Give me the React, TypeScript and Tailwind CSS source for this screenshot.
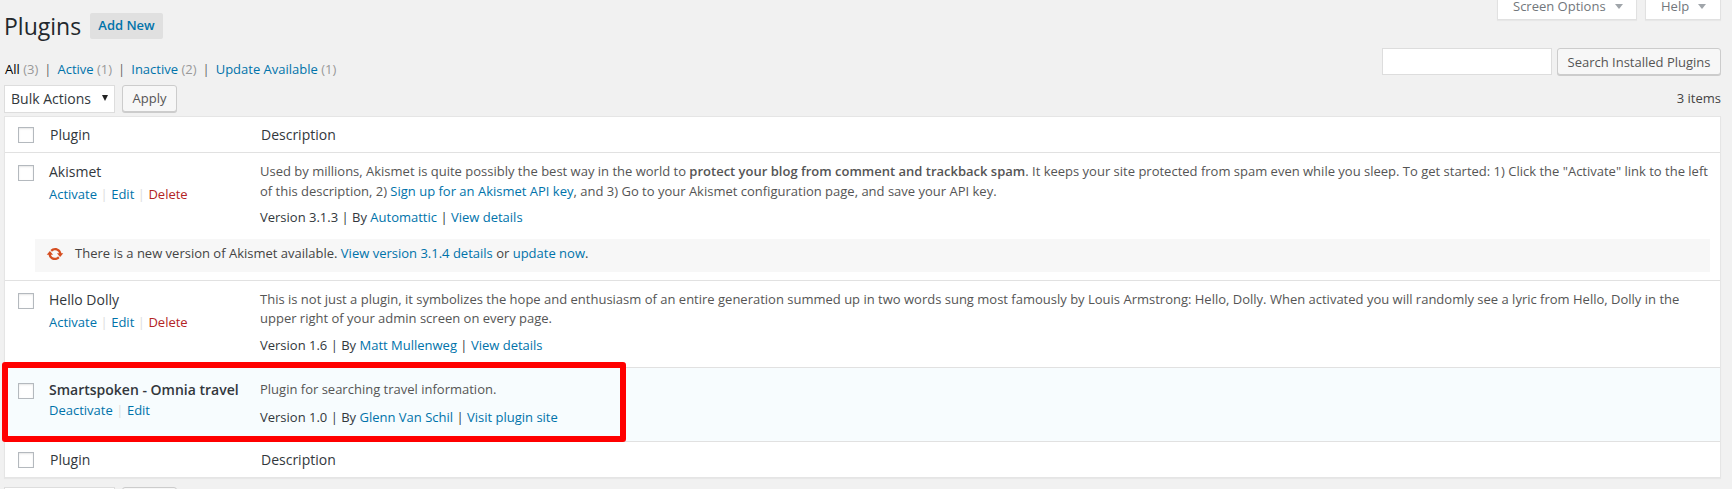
import React from "react";

const Link = ({ children, className = "" }: { children: React.ReactNode; className?: string }) => (
  <a className={`text-[#0073aa] ${className}`}>{children}</a>
);

const Box = () => <span className="block w-4 h-4 border border-[#b4b9be] bg-white shadow-[inset_0_1px_2px_rgba(0,0,0,0.1)]" />;

const Sep = () => <span className="text-[#ddd] mx-[3.5px]">|</span>;

const HeadRow = ({ top }: { top?: boolean }) => (
  <div className={`grid grid-cols-[45px_211px_1fr] h-9 items-center text-sm text-[#32373c] ${top ? "border-b border-[#e1e1e1]" : "border-t border-[#e1e1e1]"}`}>
    <div className="pl-[13px]"><Box /></div>
    <div>Plugin</div>
    <div>Description</div>
  </div>
);

const Row = ({
  name, actions, desc, meta, active, pb,
}: {
  name: string; actions: React.ReactNode; desc: React.ReactNode; meta: React.ReactNode; active?: boolean; pb: string;
}) => (
  <div className={`grid grid-cols-[44px_211px_1fr] text-[13px] leading-[19.5px] ${active ? "bg-[#f7fcfe] pt-[12px]" : "pt-[9px]"} ${pb}`}>
    <div className="pl-[13px] pt-[3px]"><Box /></div>
    <div>
      <div className={`text-sm leading-5 text-[#32373c] ${active ? "font-semibold" : ""}`}>{name}</div>
      <div className={active ? "mt-px" : "mt-[3px]"}>{actions}</div>
    </div>
    <div className="pr-[10px] text-[#32373c]">
      <div className="text-[#555]">{desc}</div>
      <div className={active ? "mt-2" : "mt-[7px]"}>{meta}</div>
    </div>
  </div>
);

export default function App() {
  return (
    <div className="h-[489px] overflow-hidden bg-[#f1f1f1] pl-1 pr-[11px] text-[13px] text-[#444] relative" style={{ fontFamily: '"Open Sans", sans-serif' }}>
      <div className="flex justify-end gap-2 h-5 -mb-5 text-[#72777c] text-[13px]">
        <div className="flex items-center gap-[9px] w-[140px] h-[21px] -mt-px pl-[15px] pb-[6px] bg-white border border-[#e1e1e1] shadow-[0_1px_1px_rgba(0,0,0,0.04)]">
          Screen Options <span className="w-0 h-0 border-x-[4px] border-t-[5px] border-x-transparent border-t-[#a0a5aa]" />
        </div>
        <div className="flex items-center gap-[9px] w-[76px] h-[21px] -mt-px pl-[15px] pb-[6px] bg-white border border-[#e1e1e1] shadow-[0_1px_1px_rgba(0,0,0,0.04)]">
          Help <span className="w-0 h-0 border-x-[4px] border-t-[5px] border-x-transparent border-t-[#a0a5aa]" />
        </div>
      </div>

      <div className="flex items-center h-[26px] mt-[13px] relative">
        <h1 className="w-[86px] text-[23px] font-normal text-[#23282d] leading-[26px]">Plugins</h1>
        <a className="flex items-center justify-center w-[73px] h-[26px] rounded-[2px] bg-[#e0e0e0] text-[#0073aa] text-[13px] font-semibold">Add New</a>
      </div>

      <div className="flex justify-between items-start h-[27px] mt-[9px]">
        <div className="text-[#666] mt-[11px] ml-px leading-5">
          <span className="text-black">All</span> <span className="text-[#999]">(3)</span>
          <span className="mx-[6px]">|</span>
          <Link>Active</Link> <span className="text-[#999]">(1)</span>
          <span className="mx-[6px]">|</span>
          <Link>Inactive</Link> <span className="text-[#999]">(2)</span>
          <span className="mx-[6px]">|</span>
          <Link>Update Available</Link> <span className="text-[#999]">(1)</span>
        </div>
        <div className="flex gap-[5px]">
          <div className="w-[170px] h-[27px] bg-white border border-[#ddd]" />
          <button className="w-[164px] h-[27px] pt-[2px] rounded-[3px] border border-[#ccc] bg-[#f7f7f7] text-[#555] text-[13px] shadow-[0_1px_0_#ccc]">Search Installed Plugins</button>
        </div>
      </div>

      <div className="flex justify-between items-center mt-[10px] h-[28px]">
        <div className="flex gap-[7px]">
          <div className="w-[111px] h-[28px] bg-white border border-[#ddd] flex items-center pl-[6px] pr-[6px] justify-between text-[#32373c] text-sm">
            Bulk Actions <span className="w-0 h-0 border-x-[3.5px] border-t-[6px] border-x-transparent border-t-[#222] mb-[2px]" />
          </div>
          <button className="w-[55px] h-[27px] rounded-[3px] border border-[#ccc] bg-[#f7f7f7] text-[#555] text-[13px] shadow-[0_1px_0_#ccc]">Apply</button>
        </div>
        <div className="text-[#444]">3 items</div>
      </div>

      <div className="mt-[3px] bg-white border border-[#e5e5e5] shadow-[0_1px_1px_rgba(0,0,0,0.04)]">
        <HeadRow top />

        <Row
          pb="pb-[11px]"
          name="Akismet"
          actions={<><Link>Activate</Link><Sep /><Link>Edit</Link><Sep /><a className="text-[#b32424]">Delete</a></>}
          desc={<>Used by millions, Akismet is quite possibly the best way in the world to <strong className="font-semibold">protect your blog from comment and trackback spam</strong>. It keeps your site protected from spam even while you sleep. To get started: 1) Click the "Activate" link to the left of this description, 2) <Link>Sign up for an Akismet API key</Link>, and 3) Go to your Akismet configuration page, and save your API key.</>}
          meta={<>Version 3.1.3 | By <Link>Automattic</Link> | <Link>View details</Link></>}
        />
        <div className="border-b border-[#e1e1e1] pl-[30px] pr-[10px] pb-2">
          <div className="h-[33px] pb-[2px] bg-[#f7f7f7] flex items-center pl-[11px] gap-[11px] text-[13px] text-[#444]">
            <svg viewBox="0 0 20 20" className="w-[18px] h-[18px] fill-[#d54e21]">
              <path d="M10.2 3.28c3.53 0 6.43 2.61 6.92 6h2.08l-3.5 4-3.5-4h2.32c-.45-1.97-2.21-3.45-4.32-3.45-1.45 0-2.73.71-3.54 1.78L4.95 5.66C6.23 4.2 8.11 3.28 10.2 3.28zm-.4 13.44c-3.52 0-6.43-2.61-6.92-6H.8l3.5-4c1.17 1.33 2.33 2.67 3.5 4H5.48c.45 1.97 2.21 3.45 4.32 3.45 1.45 0 2.73-.71 3.54-1.78l1.71 1.95c-1.28 1.46-3.15 2.38-5.25 2.38z" />
            </svg>
            <span>There is a new version of Akismet available. <Link>View version 3.1.4 details</Link> or <Link>update now</Link>.</span>
          </div>
        </div>

        <Row
          pb="pb-[12px] border-b border-[#e1e1e1]"
          name="Hello Dolly"
          actions={<><Link>Activate</Link><Sep /><Link>Edit</Link><Sep /><a className="text-[#b32424]">Delete</a></>}
          desc={<>This is not just a plugin, it symbolizes the hope and enthusiasm of an entire generation summed up in two words sung most famously by Louis Armstrong: Hello, Dolly. When activated you will randomly see a lyric from Hello, Dolly in the upper right of your admin screen on every page.</>}
          meta={<>Version 1.6 | By <Link>Matt Mullenweg</Link> | <Link>View details</Link></>}
        />
        <Row
          active
          pb="pb-[14px]"
          name="Smartspoken - Omnia travel"
          actions={<><Link>Deactivate</Link><Sep /><Link>Edit</Link></>}
          desc={<>Plugin for searching travel information.</>}
          meta={<>Version 1.0 | By <Link>Glenn Van Schil</Link> | <Link>Visit plugin site</Link></>}
        />

        <HeadRow />
      </div>

      <div className="flex gap-[7px] mt-[9px]">
        <div className="w-[111px] h-[28px] bg-white border border-[#ddd]" />
        <div className="w-[55px] h-[27px] rounded-[3px] border border-[#ccc] bg-[#f7f7f7]" />
      </div>

      <div className="absolute left-[2px] top-[362px] w-[624px] h-[80px] border-[6px] border-[#ff0000] rounded-[3px] pointer-events-none" />
    </div>
  );
}
